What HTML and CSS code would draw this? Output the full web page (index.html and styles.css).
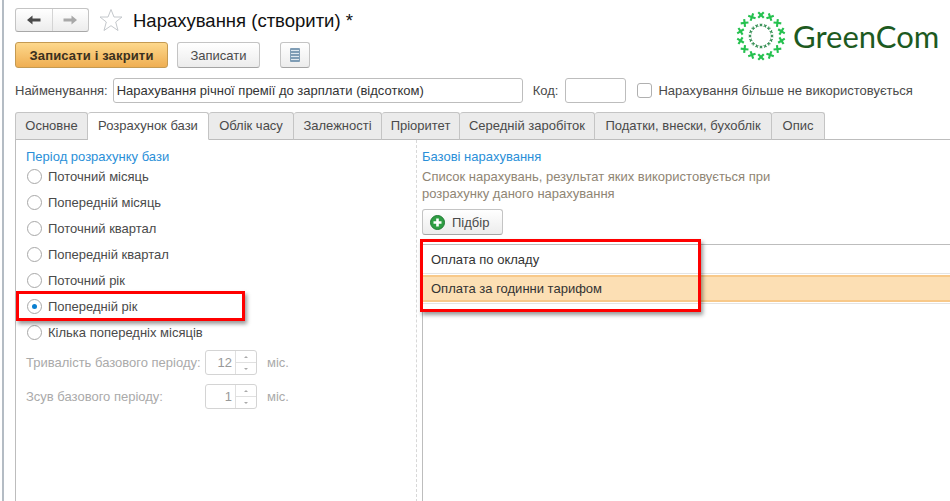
FILE: index.html
```html
<!DOCTYPE html>
<html lang="en">
  <head>
    <meta charset="UTF-8" />
    <title>Нарахування (створити)</title>
    <link rel="stylesheet" href="styles.css">
  </head>
  <body>
    <div class="page">
      <header class="header">
        <div class="header-left">
          <div class="title-row">
            <div class="nav-group">
              <span class="nav-btn">
                <svg width="14" height="10" viewBox="0 0 14 10"><path d="M0 5 5.500 0.500V3.500H13.500V6.500H5.500V9.500Z" fill="#4a4a4a"/></svg>
              </span>
              <span class="nav-btn">
                <svg width="14" height="10" viewBox="0 0 14 10"><path d="M14 5 8.500 0.500V3.500H0.500V6.500H8.500V9.500Z" fill="#a8a8a8"/></svg>
              </span>
            </div>
            <svg class="star" width="24" height="24" viewBox="0 0 24 24"><path d="M12 1.500 15 9H23L16.700 14 19 22.500 12 17.700 5 22.500 7.300 14 1 9H9Z" fill="#fff" stroke="#c4c8cc"/></svg>
            <h1 class="title">Нарахування (створити) *</h1>
          </div>
          <div class="command-row">
            <button class="btn btn-primary">Записати і закрити</button>
            <button class="btn btn-save">Записати</button>
            <button class="btn btn-icon">
              <svg width="10" height="14" viewBox="0 0 10 14">
                <rect width="10" height="14" rx="1" fill="#7f9db5"/>
                <path d="M1 2.500H9M1 5.500H9M1 8.500H9M1 11.500H9" stroke="#dfe8ef"/>
              </svg>
            </button>
          </div>
        </div>
        <div class="logo">
          <svg width="50" height="50" viewBox="-25 -25 50 50">
            <defs>
              <path id="cross-big" d="M-3.500 -2 -2 -3.500 0 -1.500 2 -3.500 3.500 -2 1.500 0 3.500 2 2 3.500 0 1.500 -2 3.500 -3.500 2 -1.500 0Z" fill="#25c14f"/>
              <path id="cross-small" d="M-1.600 -0.900 -0.900 -1.600 0 -0.700 0.900 -1.600 1.600 -0.900 0.700 0 1.600 0.900 0.900 1.600 0 0.700 -0.900 1.600 -1.600 0.900 -0.700 0Z" fill="#2e8b4e"/>
            </defs>
            <use href="#cross-big" transform="rotate(0) translate(0 -21)"/>
            <use href="#cross-big" transform="rotate(25.700) translate(0 -21)"/>
            <use href="#cross-big" transform="rotate(51.400) translate(0 -21)"/>
            <use href="#cross-big" transform="rotate(77.100) translate(0 -21)"/>
            <use href="#cross-big" transform="rotate(102.900) translate(0 -21)"/>
            <use href="#cross-big" transform="rotate(128.600) translate(0 -21)"/>
            <use href="#cross-big" transform="rotate(154.300) translate(0 -21)"/>
            <use href="#cross-big" transform="rotate(180) translate(0 -21)"/>
            <use href="#cross-big" transform="rotate(205.700) translate(0 -21)"/>
            <use href="#cross-big" transform="rotate(231.400) translate(0 -21)"/>
            <use href="#cross-big" transform="rotate(257.100) translate(0 -21)"/>
            <use href="#cross-big" transform="rotate(282.900) translate(0 -21)"/>
            <use href="#cross-big" transform="rotate(308.600) translate(0 -21)"/>
            <use href="#cross-big" transform="rotate(334.300) translate(0 -21)"/>
            <use href="#cross-small" transform="rotate(0) translate(0 -11)"/>
            <use href="#cross-small" transform="rotate(22.500) translate(0 -11)"/>
            <use href="#cross-small" transform="rotate(45) translate(0 -11)"/>
            <use href="#cross-small" transform="rotate(67.500) translate(0 -11)"/>
            <use href="#cross-small" transform="rotate(90) translate(0 -11)"/>
            <use href="#cross-small" transform="rotate(112.500) translate(0 -11)"/>
            <use href="#cross-small" transform="rotate(135) translate(0 -11)"/>
            <use href="#cross-small" transform="rotate(157.500) translate(0 -11)"/>
            <use href="#cross-small" transform="rotate(180) translate(0 -11)"/>
            <use href="#cross-small" transform="rotate(202.500) translate(0 -11)"/>
            <use href="#cross-small" transform="rotate(225) translate(0 -11)"/>
            <use href="#cross-small" transform="rotate(247.500) translate(0 -11)"/>
            <use href="#cross-small" transform="rotate(270) translate(0 -11)"/>
            <use href="#cross-small" transform="rotate(292.500) translate(0 -11)"/>
            <use href="#cross-small" transform="rotate(315) translate(0 -11)"/>
            <use href="#cross-small" transform="rotate(337.500) translate(0 -11)"/>
          </svg>
          <span class="logo-text">GreenCom</span>
        </div>
      </header>

      <div class="form-row">
        <label class="field-label">Найменування:</label>
        <div class="input input-name">Нарахування річної премії до зарплати (відсотком)</div>
        <label class="field-label label-code">Код:</label>
        <div class="input input-code"></div>
        <span class="checkbox"></span>
        <span class="field-label">Нарахування більше не використовується</span>
      </div>

      <nav class="tabs">
        <span class="tab tab-1">Основне</span>
        <span class="tab tab-2 tab-active">Розрахунок бази</span>
        <span class="tab tab-3">Облік часу</span>
        <span class="tab tab-4">Залежності</span>
        <span class="tab tab-5">Пріоритет</span>
        <span class="tab tab-6">Середній заробіток</span>
        <span class="tab tab-7">Податки, внески, бухоблік</span>
        <span class="tab tab-8">Опис</span>
      </nav>

      <main class="panel">
        <section class="col-left">
          <h2 class="group-title">Період розрахунку бази</h2>
          <div class="radio-list">
            <div class="radio-row"><span class="radio"></span>Поточний місяць</div>
            <div class="radio-row"><span class="radio"></span>Попередній місяць</div>
            <div class="radio-row"><span class="radio"></span>Поточний квартал</div>
            <div class="radio-row"><span class="radio"></span>Попередній квартал</div>
            <div class="radio-row"><span class="radio"></span>Поточний рік</div>
            <div class="radio-row"><span class="radio radio-on"></span>Попередній рік</div>
            <div class="radio-row"><span class="radio"></span>Кілька попередніх місяців</div>
          </div>
          <div class="spin-row spin-first">
            <span class="spin-label">Тривалість базового періоду:</span>
            <div class="spin"><span class="spin-value">12</span><span class="spin-arrows"><i class="up"></i><i class="down"></i></span></div>
            <span class="spin-unit">міс.</span>
          </div>
          <div class="spin-row">
            <span class="spin-label">Зсув базового періоду:</span>
            <div class="spin"><span class="spin-value">1</span><span class="spin-arrows"><i class="up"></i><i class="down"></i></span></div>
            <span class="spin-unit">міс.</span>
          </div>
        </section>

        <section class="col-right">
          <h2 class="group-title">Базові нарахування</h2>
          <p class="hint">Список нарахувань, результат яких використовується при<br>розрахунку даного нарахування</p>
          <button class="btn btn-pick">
            <svg width="15" height="15" viewBox="0 0 15 15">
              <circle cx="7.500" cy="7.500" r="7" fill="#2f9e44" stroke="#1f7a33"/>
              <path d="M7.500 3.500V11.500M3.500 7.500H11.500" stroke="#fff" stroke-width="2.600"/>
            </svg>
            Підбір
          </button>
          <div class="list">
            <div class="list-row">Оплата по окладу</div>
            <div class="list-row list-row-selected">Оплата за годинни тарифом</div>
          </div>
        </section>
      </main>
    </div>

    <div class="mark mark-radio"></div>
    <div class="mark mark-list"></div>
  </body>
</html>
```

FILE: styles.css
```css
* {
  margin: 0;
  padding: 0;
  box-sizing: border-box;
}

html,
body {
  height: 501px;
  overflow: hidden;
}

body {
  position: relative;
  background-color: #fff;
  font-family: "Liberation Sans", Arial, sans-serif;
  font-size: 13px;
  color: #4a4a4a;
}

.page {
  height: 501px;
  margin-left: 2px;
  padding-left: 11px;
  border-left: 2px solid #b4bcc4;
  display: flex;
  flex-direction: column;
}

/* header */
.header {
  height: 78px;
  display: flex;
  justify-content: space-between;
  flex-shrink: 0;
}

.title-row {
  height: 42px;
  padding-top: 8px;
  display: flex;
  align-items: flex-start;
}

.nav-group {
  width: 74px;
  height: 24px;
  display: flex;
  border: 1px solid #c4c4c4;
  border-bottom-color: #a8a8a8;
  border-radius: 3px;
  background: linear-gradient(#fff, #ececec);
}

.nav-btn {
  flex: 1;
  display: flex;
  align-items: center;
  justify-content: center;
}

.nav-btn + .nav-btn {
  border-left: 1px solid #d4d4d4;
}

.star {
  margin: 0 9px 0 10px;
}

.title {
  font-size: 18.5px;
  font-weight: normal;
  line-height: 26px;
  color: #111;
  margin-left: 1px;
}

.command-row {
  display: flex;
  gap: 9px;
}

.btn {
  height: 26px;
  padding: 0 13px;
  font-family: inherit;
  font-size: 13px;
  color: #4a4a4a;
  border: 1px solid #c4c4c4;
  border-bottom-color: #a4a4a4;
  border-radius: 3px;
  background: linear-gradient(#fff, #ececec);
}

.btn-primary {
  width: 153px;
  padding: 0;
  font-weight: bold;
  letter-spacing: 0.15px;
  color: #3a3020;
  border-color: #c49a52;
  background: linear-gradient(#fdd88c, #efae52);
}

.btn-save {
  width: 83px;
  padding: 0;
}

.btn-icon {
  width: 30px;
  margin-left: 11px;
  padding: 0;
  display: flex;
  align-items: center;
  justify-content: center;
}

.logo {
  width: 214px;
  height: 50px;
  margin-top: 11px;
  display: flex;
  align-items: center;
  gap: 7px;
}

.logo-text {
  font-family: "Lato", sans-serif;
  font-size: 31px;
  color: #1d5a1f;
}

/* name row */
.form-row {
  height: 25px;
  display: flex;
  align-items: center;
  flex-shrink: 0;
}

.input {
  height: 25px;
  line-height: 23px;
  padding-left: 3px;
  border: 1px solid #bdbdbd;
  border-radius: 3px;
  color: #333;
}

.input-name {
  width: 410px;
  margin-left: 5px;
}

.label-code {
  margin-left: 10px;
}

.input-code {
  width: 61px;
  margin-left: 7px;
}

.checkbox {
  width: 15px;
  height: 15px;
  margin: 0 6px 0 11px;
  border: 1px solid #b0b0b0;
  border-radius: 3px;
}

/* tabs */
.tabs {
  height: 28px;
  margin-top: 9px;
  display: flex;
  border-bottom: 1px solid #bdbdbd;
  flex-shrink: 0;
}

.tab {
  height: 28px;
  line-height: 26px;
  text-align: center;
  background-color: #ebebeb;
  border: 1px solid #c4c4c4;
  border-bottom-color: #bdbdbd;
  border-left: 0;
  border-radius: 3px 3px 0 0;
}

.tab-1 { width: 73px; border-left: 1px solid #c4c4c4; }
.tab-2 { width: 121px; }
.tab-3 { width: 85px; }
.tab-4 { width: 88px; }
.tab-5 { width: 78px; }
.tab-6 { width: 135px; }
.tab-7 { width: 177px; }
.tab-8 { width: 53px; }

.tab-active {
  background-color: #fff;
  border-bottom-color: #fff;
}

/* tab body */
.panel {
  flex: 1;
  display: flex;
  border-left: 1px solid #bdbdbd;
}

.col-left {
  width: 401px;
  padding: 10px 0 0 10px;
  border-right: 1px dashed #d8d8d8;
  flex-shrink: 0;
}

.group-title {
  height: 13px;
  font-size: 13px;
  font-weight: normal;
  line-height: 14px;
  color: #2a8fd8;
}

.radio-list {
  margin-left: 1px;
}

.radio-row {
  height: 26px;
  display: flex;
  align-items: center;
}

.radio {
  width: 15px;
  height: 15px;
  margin-right: 6px;
  border: 1px solid #a8a8a8;
  border-radius: 50%;
  display: flex;
  align-items: center;
  justify-content: center;
}

.radio-on::after {
  content: "";
  width: 5px;
  height: 5px;
  border-radius: 50%;
  background-color: #0a7fd0;
}

.spin-row {
  height: 25px;
  margin-top: 9px;
  display: flex;
  align-items: center;
  color: #aaa;
}

.spin-first {
  margin-top: 5px;
}

.spin-label {
  width: 179px;
}

.spin {
  width: 52px;
  height: 25px;
  display: flex;
  border: 1px solid #d4d4d4;
  border-radius: 3px;
}

.spin-value {
  flex: 1;
  line-height: 23px;
  text-align: right;
  padding-right: 3px;
  color: #999;
}

.spin-arrows {
  width: 21px;
  border-left: 1px solid #e0e0e0;
  display: flex;
  flex-direction: column;
}

.spin-arrows i {
  flex: 1;
  display: flex;
  align-items: center;
  justify-content: center;
}

.spin-arrows i::after {
  content: "";
  border-left: 2px solid transparent;
  border-right: 2px solid transparent;
}

.spin-arrows .up::after {
  border-bottom: 2px solid #aaa;
}

.spin-arrows .down {
  border-top: 1px solid #e0e0e0;
}

.spin-arrows .down::after {
  border-top: 2px solid #aaa;
}

.spin-unit {
  margin-left: 10px;
}

.col-right {
  flex: 1;
  padding: 10px 0 0 5px;
  min-width: 0;
}

.hint {
  margin-top: 5px;
  line-height: 17px;
  color: #8f8574;
}

.btn-pick {
  width: 81px;
  margin-top: 7px;
  padding: 0 0 0 7px;
  display: flex;
  align-items: center;
  gap: 7px;
}

.list {
  height: 258px;
  margin-top: 9px;
  border-top: 1px solid #bdbdbd;
  border-left: 1px solid #bdbdbd;
  color: #333;
}

.list-row {
  height: 29px;
  padding-left: 8px;
  line-height: 29px;
  border-bottom: 1px solid #e4e4e4;
}

.list-row-selected {
  height: 27px;
  margin-top: 1px;
  line-height: 23px;
  background-color: #fcdfb4;
  border-top: 2px solid #f8c98a;
  border-bottom: 2px solid #f8c98a;
  box-shadow: 0 1px 0 #fff, 0 2px 0 #e4e4e4;
}

/* red callouts drawn on top of the form */
.mark {
  position: absolute;
  border: 3px solid #f00;
  box-shadow: 2px 3px 4px rgba(0, 0, 0, 0.4);
}

.mark-radio {
  left: 16px;
  top: 291px;
  width: 229px;
  height: 30px;
}

.mark-list {
  left: 420px;
  top: 239px;
  width: 281px;
  height: 73px;
}
```
